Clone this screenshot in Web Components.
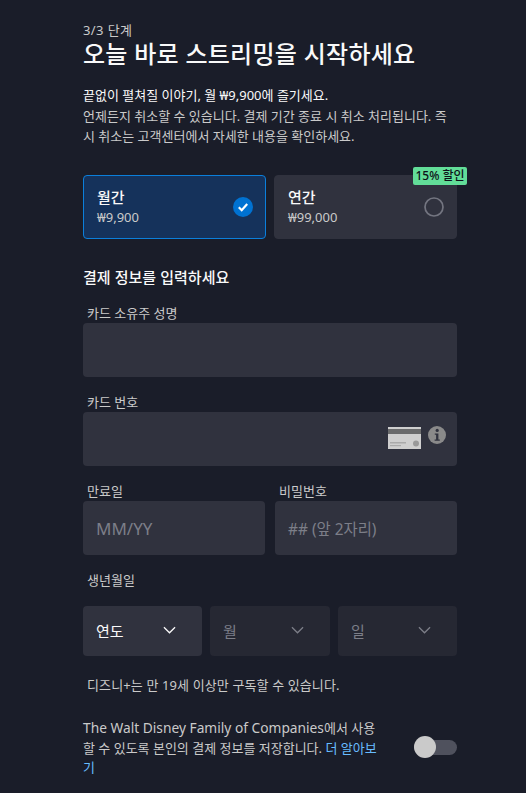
<!DOCTYPE html>
<html lang="ko"><head><meta charset="utf-8"><style>
html,body{margin:0;padding:0;background:#1a1d29;height:793px;overflow:hidden}
body{font-family:"Noto Sans","Noto Sans CJK KR",sans-serif;color:#f9f9f9}
</style></head><body>
<checkout-page>
<page-head step="3/3 단계" title="오늘 바로 스트리밍을 시작하세요"></page-head>
<div slot="plans"><plan-card name="월간" price="₩9,900" selected></plan-card><plan-card name="연간" price="₩99,000" badge="15% 할인"></plan-card></div>
<text-field slot="f1" label="카드 소유주 성명"></text-field>
<text-field slot="f2" label="카드 번호" card></text-field>
<text-field slot="f3" label="만료일" placeholder="MM/YY" style="--ph-size:17px"></text-field>
<text-field slot="f4" label="비밀번호" placeholder="## (앞 2자리)" style="--ph-size:15.4px"></text-field>
<select-box slot="s1" value="연도" active></select-box>
<select-box slot="s2" value="월"></select-box>
<select-box slot="s3" value="일"></select-box>
<consent-row slot="consent"><span style="font-size:13.75px">The Walt Disney Family of Companies</span>에서 사용할 수 있도록 본인의 결제 정보를 저장합니다. <a>더 알아보기</a></consent-row>
</checkout-page>
<script>
class Base extends HTMLElement{
  render(html){this.attachShadow({mode:'open'}).innerHTML=html}
}
customElements.define('checkout-page',class extends Base{connectedCallback(){this.render(`<style>
:host{display:block;box-sizing:border-box;width:374px;margin-left:83px;padding-top:20px}
.plans{margin-top:29px}
::slotted([slot=plans]){display:grid;grid-template-columns:183px 183px;gap:8px}
h2{margin:27px 0 0;font-size:15px;line-height:22px;font-weight:500;color:#f9f9f9;letter-spacing:.05px}
.f{margin-top:15px}
.f2{margin-top:15px}
.row{display:grid;grid-template-columns:182px 182px;gap:10px;margin-top:15px}
.lab{margin:15px 0 0 4px;font-size:13px;line-height:20px;color:#cacaca}
.sel{display:grid;grid-template-columns:119px 120px 119px;gap:8px;margin-top:16px}
.note{margin:19px 0 0 4px;font-size:13px;line-height:20px;color:#cacaca;letter-spacing:.12px}
.cons{margin-top:23px}
</style>
<slot></slot>
<div class="plans"><slot name="plans"></slot></div>
<h2>결제 정보를 입력하세요</h2>
<div class="f"><slot name="f1"></slot></div>
<div class="f2"><slot name="f2"></slot></div>
<div class="row"><slot name="f3"></slot><slot name="f4"></slot></div>
<div class="lab">생년월일</div>
<div class="sel"><slot name="s1"></slot><slot name="s2"></slot><slot name="s3"></slot></div>
<div class="note">디즈니+는 만 19세 이상만 구독할 수 있습니다.</div>
<div class="cons"><slot name="consent"></slot></div>`)}});
customElements.define('page-head',class extends Base{connectedCallback(){this.render(`<style>
:host{display:block}
.s{font-size:13px;line-height:20px;color:#cacaca;letter-spacing:.4px}
h1{margin:0;font-size:24px;line-height:28px;font-weight:500;color:#f9f9f9;letter-spacing:.27px}
.a{margin:17px 0 0;font-size:13px;line-height:20px;color:#f9f9f9}
.b{margin:2px 0 0;font-size:13px;line-height:19.5px;color:#cacaca}
</style>
<div class="s">${this.getAttribute('step')}</div>
<h1>${this.getAttribute('title')}</h1>
<p class="a">끝없이 펼쳐질 이야기, 월 ₩9,900에 즐기세요.</p>
<p class="b">언제든지 취소할 수 있습니다. 결제 기간 종료 시 취소 처리됩니다. 즉시 취소는 고객센터에서 자세한 내용을 확인하세요.</p>`)}});
customElements.define('plan-card',class extends Base{connectedCallback(){const on=this.hasAttribute('selected'),b=this.getAttribute('badge');this.render(`<style>
:host{display:flex;box-sizing:border-box;height:64px;position:relative;align-items:center;justify-content:space-between;padding:0 12px 0 13px;border-radius:4px;
background:${on?'#15325b':'#30323e'};border:1px solid ${on?'#0b7fdb':'#30323e'}}
.n{font-size:15px;line-height:21px;font-weight:500;color:#f9f9f9}
.p{font-size:13px;line-height:19px;color:#cacaca}
svg{display:block;width:20px;height:20px}
.badge{position:absolute;top:-9px;right:-11px;box-sizing:border-box;width:54px;height:18px;text-align:center;border-radius:2px;background:#62dd98;color:#0e1119;font-size:12px;line-height:18px;font-weight:500;white-space:nowrap}
</style>
<div><div class="n">${this.getAttribute('name')}</div><div class="p">${this.getAttribute('price')}</div></div>
${on?`<svg viewBox="0 0 20 20"><circle cx="10" cy="10" r="10" fill="#0072d2"/><path d="M5.8 10.3l2.9 2.9 5.5-6.2" fill="none" stroke="#fff" stroke-width="2.2"/></svg>`:`<svg viewBox="0 0 20 20"><circle cx="10" cy="10" r="9" fill="none" stroke="#737580" stroke-width="1.7"/></svg>`}
${b?`<div class="badge">${b}</div>`:''}`)}});
customElements.define('text-field',class extends Base{connectedCallback(){const card=this.hasAttribute('card'),ph=this.getAttribute('placeholder')||'';this.render(`<style>
:host{display:block}
label{display:block;margin-left:4px;font-size:13px;line-height:20px;color:#cacaca}
.box{box-sizing:border-box;height:54px;background:#30323e;border-radius:4px;display:flex;align-items:center;justify-content:flex-end;padding:0 11px 0 13px}
.ph{flex:1;font-size:var(--ph-size,16px);color:#7c7e88}
.c{display:flex;align-items:center;gap:7px;margin-top:-2px}
svg{display:block}
</style>
<label>${this.getAttribute('label')}</label>
<div class="box"><span class="ph">${ph}</span>${card?`<span class="c"><svg width="33" height="22" viewBox="0 0 33 22"><rect width="33" height="22" fill="#cfcfcf"/><rect y="2" width="33" height="5" fill="#6a6b6c"/><rect x="2" y="15" width="16" height="1.5" fill="#aaa"/><rect x="2" y="18" width="11" height="1.2" fill="#aaa"/><circle cx="28" cy="16.5" r="3" fill="#999"/></svg><svg width="18" height="18" viewBox="0 0 18 18" style="margin-top:-6px"><circle cx="9" cy="9" r="9" fill="#8a8a8a"/><circle cx="9.2" cy="4.4" r="1.6" fill="#30323e"/><path d="M6.8 7.4h3.6v6h1.4v1.3H6.6v-1.3h1.5V8.7H6.8z" fill="#30323e"/></svg></span>`:''}</div>`)}});
customElements.define('select-box',class extends Base{connectedCallback(){const a=this.hasAttribute('active');this.render(`<style>
:host{display:flex;box-sizing:border-box;height:50px;border-radius:4px;align-items:center;justify-content:space-between;padding:0 26px 0 13px;background:${a?'#30323e':'#262833'}}
span{font-size:15px;margin-top:-1px;color:${a?'#f9f9f9':'#7c7e88'}}
svg{display:block;width:13px;height:8px;margin-top:-2px}
</style><span>${this.getAttribute('value')}</span><svg viewBox="0 0 14 8"><path d="M1 1l6 6 6-6" fill="none" stroke="${a?'#f9f9f9':'#7c7e88'}" stroke-width="1.4"/></svg>`)}});
customElements.define('consent-row',class extends Base{connectedCallback(){
const link=this.querySelector('a');if(link){link.style.color='#67bcff';}
this.render(`<style>
:host{display:flex;justify-content:space-between;align-items:center;font-size:13px;line-height:19.5px;color:#cacaca}
.t{width:296px;word-break:break-all}
.tg{position:relative;width:43px;height:15px;border-radius:8px;background:#4f515d;flex:none;margin-top:-1px}
.tg i{position:absolute;left:0;top:-3.5px;width:22px;height:22px;border-radius:50%;background:#cacaca}
</style><div class="t"><slot></slot></div><div class="tg"><i></i></div>`)}});
</script>
</body></html>
